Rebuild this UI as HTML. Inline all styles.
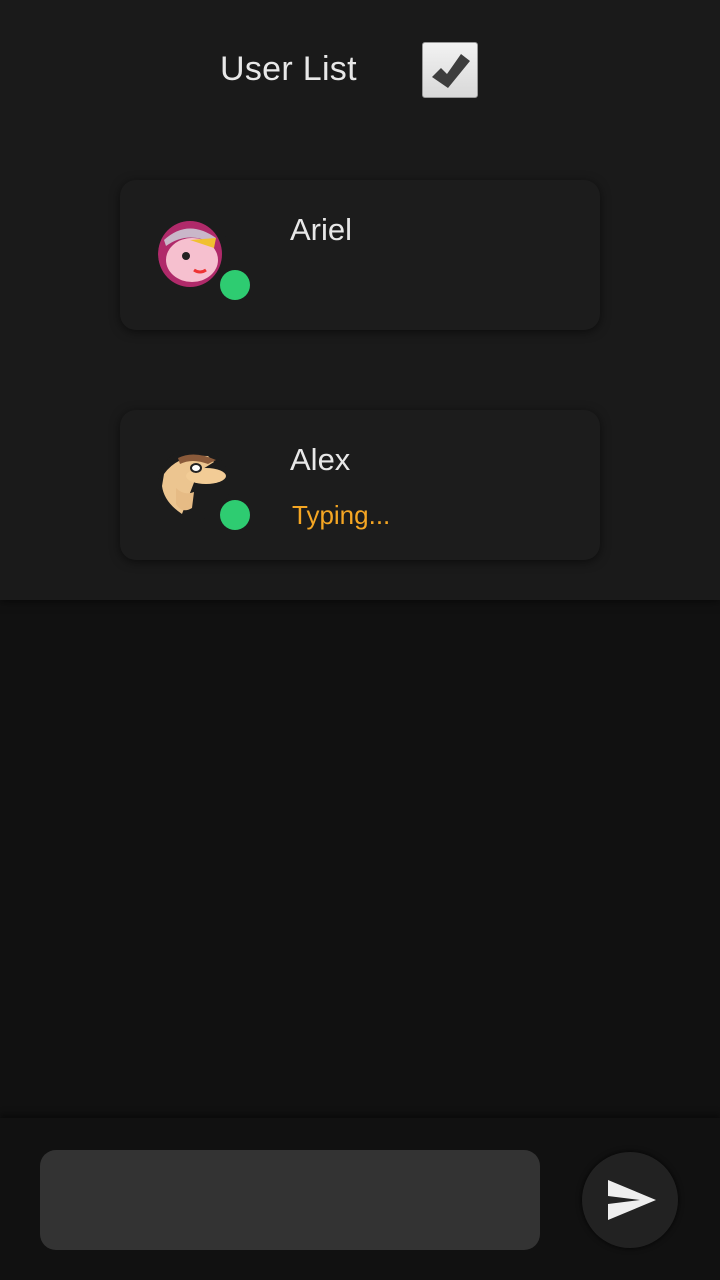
<!DOCTYPE html>
<html><head><style>
body{margin:0;width:720px;height:1280px;background:#111;font-family:"Liberation Sans",sans-serif;position:relative;overflow:hidden}
.top{position:absolute;left:0;top:0;width:720px;height:600px;background:#1a1a1a;box-shadow:0 2px 8px rgba(0,0,0,.5)}
.title{position:absolute;left:220px;top:50px;font-size:34px;color:#e8e8e8;letter-spacing:0.3px}
.chk{position:absolute;left:422px;top:42px;width:54px;height:54px;background:linear-gradient(#f2f2f2,#d8d8d8);border:1px solid #999;border-radius:3px}
.card{position:absolute;left:120px;width:480px;height:150px;background:#1c1c1c;border-radius:16px;box-shadow:0 2px 10px rgba(0,0,0,.55)}
.av{position:absolute;left:38px;top:38px;width:72px;height:72px;border-radius:50%;overflow:hidden}
.dot{position:absolute;left:100px;top:90px;width:30px;height:30px;border-radius:50%;background:#2ecc71}
.name{position:absolute;left:170px;top:32px;font-size:31px;color:#e8e8e8}
.typ{position:absolute;left:172px;top:90px;font-size:26px;color:#f5a623}
.bar{position:absolute;left:0;top:1118px;width:720px;height:162px;background:#111;box-shadow:0 -4px 6px rgba(0,0,0,.4)}
.inp{position:absolute;left:40px;top:1150px;width:500px;height:100px;background:#333;border-radius:16px}
.send{position:absolute;left:582px;top:1152px;width:96px;height:96px;border-radius:50%;background:#222;box-shadow:0 0 6px rgba(0,0,0,.8)}
</style></head><body>
<div class="top">
<div class="title">User List</div>
<div class="chk"><svg width="54" height="54" viewBox="0 0 54 54"><path d="M9 34 L18 25 L24 31 L38 11 L47 18 L25 45 Z" fill="#3d3d3d"/></svg></div>
<div class="card" style="top:180px">
<div class="av"><svg width="72" height="72" viewBox="0 0 72 72">
<ellipse cx="32" cy="36" rx="32" ry="33" fill="#b02a6a"/>
<path d="M6 22 Q30 0 58 20 L56 26 Q30 12 8 28Z" fill="#c9b7c9"/>
<ellipse cx="34" cy="42" rx="26" ry="22" fill="#f6c0cf"/>
<path d="M32 22 L58 20 L56 30 Z" fill="#f0c030"/>
<circle cx="28" cy="38" r="4" fill="#222"/>
<path d="M36 52 Q42 56 48 52" stroke="#e33" stroke-width="3" fill="none"/>
<rect x="64" y="0" width="8" height="72" fill="#1c1c1c"/>
</svg></div>
<div class="dot"></div>
<div class="name">Ariel</div>
</div>
<div class="card" style="top:410px">
<div class="av"><svg width="72" height="72" viewBox="0 0 72 72">
<rect width="72" height="72" fill="#1c1c1c"/>
<path d="M6 26 Q20 6 50 8 L56 14 L40 24 L24 66 Q6 54 4 38 Z" fill="#ecc590"/>
<path d="M20 10 Q36 2 58 12 L50 16 Q34 10 22 16Z" fill="#8a5a3a"/>
<ellipse cx="48" cy="28" rx="20" ry="8" fill="#f2cc96"/>
<ellipse cx="38" cy="20" rx="5" ry="4" fill="#fff" stroke="#222" stroke-width="2"/>
<path d="M18 40 Q26 48 36 44 L34 60 Q24 66 18 56Z" fill="#e6bb85"/>
</svg></div>
<div class="dot"></div>
<div class="name">Alex</div>
<div class="typ">Typing...</div>
</div>
</div>
<div class="bar"></div>
<div class="inp"></div>
<div class="send"><svg width="96" height="96" viewBox="0 0 96 96"><path d="M26 28 L74 48 L26 68 L26 52 L58 48 L26 44 Z" fill="#eee"/></svg></div>
</body></html>
